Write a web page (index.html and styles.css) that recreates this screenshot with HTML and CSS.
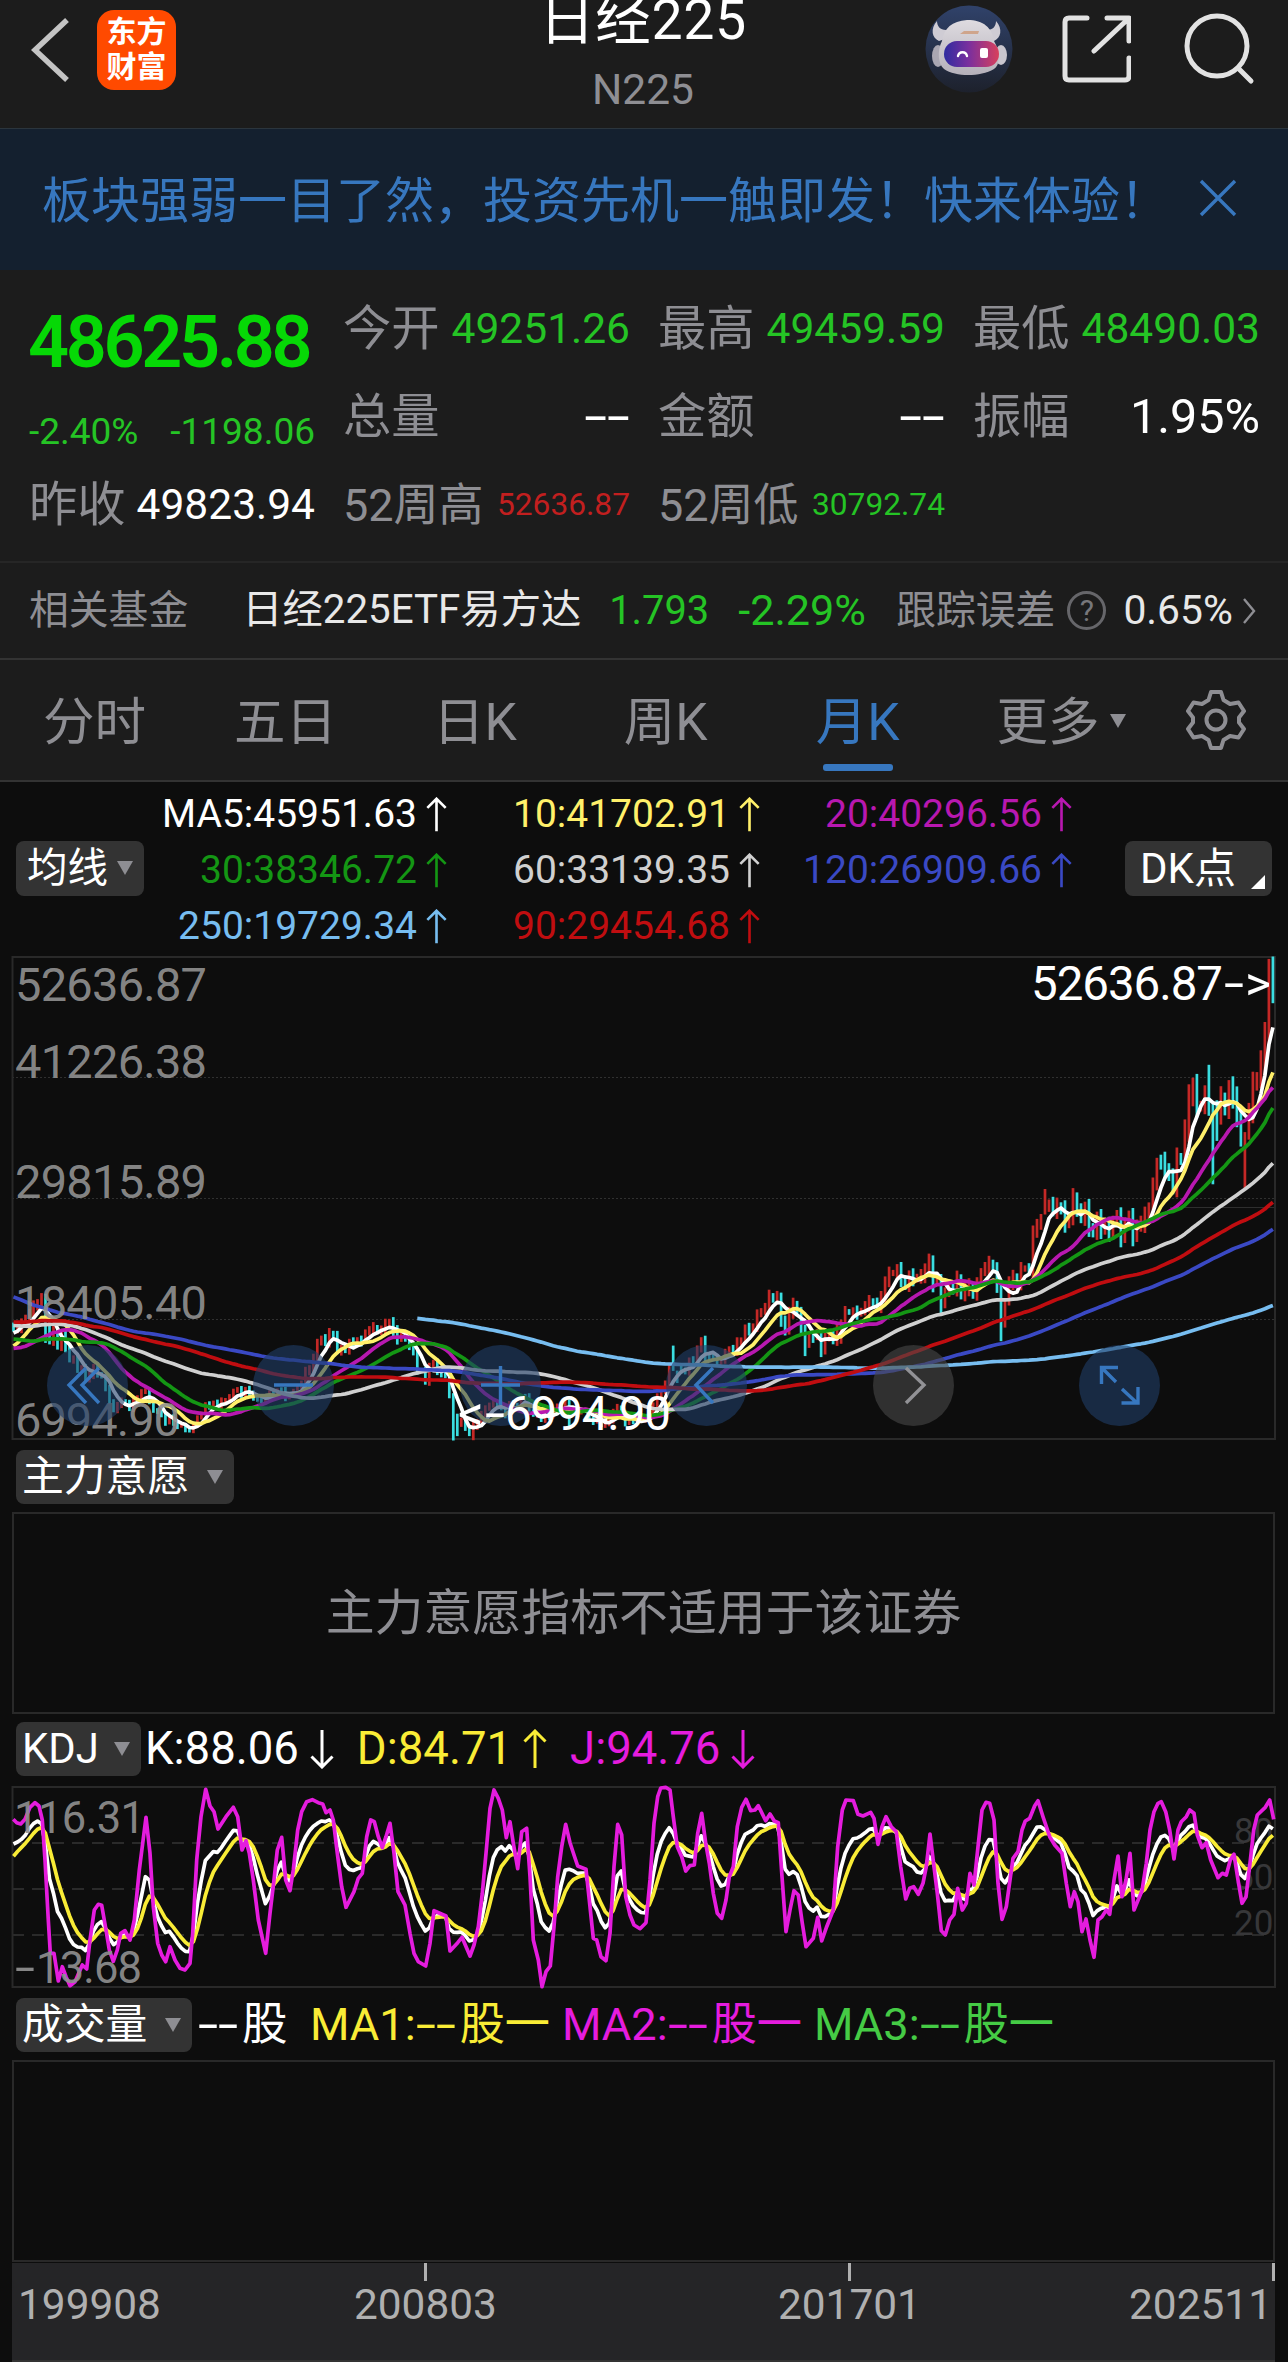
FILE: index.html
```
<!DOCTYPE html>
<html lang="zh-CN">
<head>
    <meta charset="UTF-8">
    <meta name="viewport" content="width=device-width, initial-scale=1.0">
    <title>日经225 N225</title>
    <link rel="stylesheet" href="styles.css">
</head>
<body>
    <svg class="defs" width="0" height="0">
        <symbol id="up" viewBox="0 0 24 40"><path d="M12 39V2M1.5 12.5L12 2l10.5 10.5" fill="none" stroke="currentColor" stroke-width="3"/></symbol>
        <symbol id="down" viewBox="0 0 24 40"><path d="M12 1v37M1.5 27.5L12 38l10.5-10.5" fill="none" stroke="currentColor" stroke-width="3"/></symbol>
    </svg>

    <header class="header">
        <svg class="back" width="40" height="66" viewBox="0 0 40 66"><path d="M36 3L4 33l32 30" fill="none" stroke="#c4c4c4" stroke-width="5.500"/></svg>
        <div class="logo"><span>东方</span><span>财富</span></div>
        <div class="title">
            <h1>日经225</h1>
            <p>N225</p>
        </div>
        <svg class="robot" width="88" height="88" viewBox="0 0 88 88">
            <defs>
                <linearGradient id="sky" x1="0" y1="0" x2="0" y2="1"><stop offset="0" stop-color="#30426a"/><stop offset="1" stop-color="#1d212c"/></linearGradient>
                <linearGradient id="visor" x1="0" y1="0" x2="1" y2="0"><stop offset="0" stop-color="#2f2ca0"/><stop offset=".45" stop-color="#7a2f9e"/><stop offset="1" stop-color="#d8405c"/></linearGradient>
                <linearGradient id="shell" x1="0" y1="0" x2="0" y2="1"><stop offset="0" stop-color="#dedbe0"/><stop offset="1" stop-color="#b5b1ba"/></linearGradient>
            </defs>
            <circle cx="44" cy="44" r="43.5" fill="url(#sky)"/>
            <path d="M12 16c-7 8-5 17 2 20l9-3-2-8c-6 0-9-4-9-9zM71 16c7 8 5 17-2 20l-9-3 2-8c6 0 9-4 9-9z" fill="#cfccd4"/>
            <ellipse cx="13" cy="51" rx="6" ry="11" fill="#aaa7b2"/>
            <ellipse cx="76" cy="50" rx="6" ry="10" fill="#c9c6ce"/>
            <path d="M17 36c2-13 10-20 25-21 17 0 25 8 27 21 7 12 6 24 0 28-14 8-38 8-50 0-6-5-7-18-2-28z" fill="url(#shell)"/>
            <rect x="19" y="36" width="55" height="26" rx="13" fill="url(#visor)"/>
            <path d="M33 51c1-5 8-5 9 0" fill="none" stroke="#fff" stroke-width="2.400" stroke-linecap="round"/>
            <rect x="55" y="43" width="8" height="10" rx="2" fill="#fff"/>
            <path d="M35 29l4-3h15l-1 3z" fill="#cfa58c"/>
        </svg>
        <svg class="share" width="70" height="70" viewBox="0 0 70 70"><path d="M26 4H8Q4 4 4 8v54q0 4 4 4h56q4 0 4-4V44M46 4h22v23M66 6L33 37" fill="none" stroke="#e2e2e2" stroke-width="5" stroke-linecap="round" stroke-linejoin="round"/></svg>
        <svg class="search" width="74" height="74" viewBox="0 0 74 74"><circle cx="34" cy="34" r="30" fill="none" stroke="#e2e2e2" stroke-width="5"/><path d="M55 56l13 13" stroke="#e2e2e2" stroke-width="5" stroke-linecap="round"/></svg>
    </header>

    <div class="banner">
        <p>板块强弱一目了然，投资先机一触即发！快来体验！</p>
        <svg width="38" height="38" viewBox="0 0 38 38"><path d="M2 2l34 34M36 2L2 36" stroke="#3777bf" stroke-width="3.400"/></svg>
    </div>

    <section class="quote">
        <div class="price">
            <strong>48625.88</strong>
            <div class="change"><span>-2.40%</span><span>-1198.06</span></div>
        </div>
        <div class="item"><label>今开</label><b class="green">49251.26</b></div>
        <div class="item"><label>最高</label><b class="green">49459.59</b></div>
        <div class="item"><label>最低</label><b class="green">48490.03</b></div>
        <div class="item"><label>总量</label><b class="large none">--</b></div>
        <div class="item"><label>金额</label><b class="large none">--</b></div>
        <div class="item"><label>振幅</label><b class="large">1.95%</b></div>
        <div class="item"><label>昨收</label><b>49823.94</b></div>
        <div class="item week"><label>52周高</label><b class="small red">52636.87</b></div>
        <div class="item week"><label>52周低</label><b class="small green">30792.74</b></div>
    </section>

    <div class="fund">
        <span class="grey">相关基金</span>
        <span class="fund-name">日经225ETF易方达</span>
        <span class="fund-price green">1.793</span>
        <span class="fund-change green">-2.29%</span>
        <span class="grey">跟踪误差</span>
        <span class="help">?</span>
        <span class="fund-error">0.65%</span>
        <svg width="14" height="28" viewBox="0 0 14 28"><path d="M2 2l10 12L2 26" fill="none" stroke="#8e8e93" stroke-width="2.400"/></svg>
    </div>

    <nav class="tabs">
        <a>分时</a>
        <a>五日</a>
        <a>日K</a>
        <a>周K</a>
        <a class="active">月K</a>
        <a class="more">更多<i class="caret"></i></a>
        <svg width="60" height="62" viewBox="0 0 60 62"><path d="M25 3h10l2.500 8 6.500 4 8.500-1.500L58 22l-5 6.500v5L58 40l-5.500 8.500L44 47l-6.500 4L35 59H25l-2.500-8-6.500-4-8.500 1.500L2 40l5-6.500v-5L2 22l5.500-8.500L16 15l6.500-4z" fill="none" stroke="#8e8e93" stroke-width="4" stroke-linejoin="round"/><circle cx="30" cy="31" r="9.500" fill="none" stroke="#8e8e93" stroke-width="4"/></svg>
    </nav>

    <section class="legend">
        <button class="pick">均线<i class="caret"></i></button>
        <div class="averages">
            <span class="ma5">MA5:45951.63<svg><use href="#up"/></svg></span>
            <span class="ma10">10:41702.91<svg><use href="#up"/></svg></span>
            <span class="ma20">20:40296.56<svg><use href="#up"/></svg></span>
            <span class="ma30">30:38346.72<svg><use href="#up"/></svg></span>
            <span class="ma60">60:33139.35<svg><use href="#up"/></svg></span>
            <span class="ma120">120:26909.66<svg><use href="#up"/></svg></span>
            <span class="ma250">250:19729.34<svg><use href="#up"/></svg></span>
            <span class="ma90">90:29454.68<svg><use href="#up"/></svg></span>
        </div>
        <button class="pick dk">DK点<i class="corner"></i></button>
    </section>

    <section class="kline">
        <svg id="kline" class="plot" width="1288" height="490" viewBox="0 953 1288 490">
            <g class="grid dots">
                <path d="M12 1077.500H1274M12 1198.500H1274M12 1319.500H1274"/>
            </g>
            <path d="M1170 1207.500H1274" stroke="#2e2e2e"/>
            <rect class="frame" x="12.500" y="957" width="1262.500" height="482"/>
            <g id="candles"></g>
            <g id="averages"></g>
            <g class="scale">
                <text x="15" y="1001" textLength="192">52636.87</text>
                <text x="15" y="1078" textLength="192">41226.38</text>
                <text x="15" y="1198" textLength="192">29815.89</text>
                <text x="15" y="1319" textLength="192">18405.40</text>
                <text x="15" y="1436" textLength="165">6994.90</text>
            </g>
        </svg>
        <div class="tools">
            <span><svg viewBox="0 0 81 81"><path d="M39 23L22 40l17 18M52 23L35 40l17 18"/></svg></span>
            <span><svg viewBox="0 0 81 81"><path d="M21 40h39"/></svg></span>
            <span><svg viewBox="0 0 81 81"><path d="M21 40h39M40.500 21v39"/></svg></span>
            <span><svg viewBox="0 0 81 81"><path d="M47 23L30 40l17 18"/></svg></span>
            <span class="off"><svg viewBox="0 0 81 81"><path d="M33 23l18 17-18 18"/></svg></span>
            <span><svg viewBox="0 0 81 81"><path d="M39 22.500H22.500V39M23 23l14 14M42.500 58H59V42M58 58L43 44"/></svg></span>
        </div>
        <svg class="marks" width="1288" height="490" viewBox="0 953 1288 490">
            <text y="1000"><tspan x="1031" textLength="192">52636.87</tspan><tspan x="1224" textLength="20" lengthAdjust="spacingAndGlyphs">-</tspan><tspan x="1245" textLength="26" lengthAdjust="spacingAndGlyphs">&gt;</tspan></text>
            <text y="1430"><tspan x="458" textLength="26" lengthAdjust="spacingAndGlyphs">&lt;</tspan><tspan x="485" textLength="20" lengthAdjust="spacingAndGlyphs">-</tspan><tspan x="505" textLength="166">6994.90</tspan></text>
        </svg>
    </section>

    <div class="bar main-bar">
        <button class="pick">主力意愿<i class="caret"></i></button>
    </div>
    <div class="panel message">主力意愿指标不适用于该证券</div>

    <div class="bar kdj-bar">
        <button class="pick">KDJ<i class="caret"></i></button>
        <span class="k">K:88.06<svg><use href="#down"/></svg></span>
        <span class="d">D:84.71<svg><use href="#up"/></svg></span>
        <span class="j">J:94.76<svg><use href="#down"/></svg></span>
    </div>
    <svg id="kdj" class="plot" width="1288" height="206" viewBox="0 1784 1288 206">
        <g class="grid dashes">
            <path d="M12 1843H1274M12 1889H1274M12 1935H1274"/>
        </g>
        <g class="levels">
            <text x="1234" y="1843">80</text>
            <text x="1234" y="1889">50</text>
            <text x="1234" y="1935">20</text>
        </g>
        <rect class="frame" x="12.500" y="1787" width="1262.500" height="200"/>
        <g id="kdjLines"></g>
        <g class="scale">
            <text x="14" y="1833" textLength="131">116.31</text>
            <text y="1983"><tspan x="15" textLength="20" lengthAdjust="spacingAndGlyphs">-</tspan><tspan x="36" textLength="106">13.68</tspan></text>
        </g>
    </svg>

    <div class="bar volume-bar">
        <button class="pick">成交量<i class="caret"></i></button>
        <span class="vol"><em>--</em>股</span>
        <span class="v1">MA1:<em>--</em>股一</span>
        <span class="v2">MA2:<em>--</em>股一</span>
        <span class="v3">MA3:<em>--</em>股一</span>
    </div>
    <div class="panel volume"></div>

    <footer class="axis">
        <span>199908</span>
        <span class="tick">200803</span>
        <span class="tick">201701</span>
        <span class="end">202511</span>
    </footer>

    <script src="script.js"></script>
</body>
</html>
```

FILE: styles.css
```
* {
    box-sizing: border-box;
}

body {
    margin: 0;
    width: 1288px;
    height: 2362px;
    overflow: hidden;
    background: #0d0d0d;
    color: #fff;
    font-family: Roboto, "Noto Sans CJK SC", sans-serif;
    line-height: 1;
}

h1, p {
    margin: 0;
    font-weight: 400;
}

svg {
    flex: none;
}

.defs {
    position: absolute;
}

.green {
    color: #25c425;
}

.red {
    color: #c21f1f;
}

.grey {
    color: #8e8e93;
}

/* header */
.header {
    display: flex;
    height: 129px;
    padding-left: 30px;
    background: #1c1c1c;
    border-bottom: 1px solid #2b353d;
}

.back {
    margin: 17px 0 0 1px;
}

.logo {
    display: flex;
    flex-direction: column;
    align-items: center;
    gap: 2px;
    width: 79px;
    height: 80px;
    margin: 10px 0 0 26px;
    padding-top: 5px;
    border-radius: 17px;
    background: #ff4a00;
    font-size: 30px;
    font-weight: 700;
    line-height: 33px;
}

.title {
    width: 400px;
    margin-left: 267px;
    text-align: center;
}

.title h1 {
    height: 68px;
    margin-top: -7px;
    font-size: 55.500px;
    letter-spacing: .6px;
}

.title p {
    margin-top: 8px;
    font-size: 42.500px;
    color: #8e8e93;
}

.robot {
    margin: 5px 0 0 82px;
}

.share {
    margin: 14px 0 0 48px;
}

.search {
    margin: 12px 0 0 52px;
}

/* banner */
.banner {
    display: flex;
    align-items: center;
    height: 141px;
    padding: 0 51px 0 42px;
    justify-content: space-between;
    background: #14202f;
    color: #3777bf;
}

.banner p {
    padding-top: 4px;
    font-size: 49px;
}

.banner svg {
    margin-top: -3px;
}

/* quote */
.quote {
    display: grid;
    grid-template-columns: 285px 287px 287px 287px;
    grid-template-rows: 88px 88px 88px;
    column-gap: 28px;
    height: 293px;
    padding: 15px 27px 0 30px;
    background: #1c1c1c;
    border-bottom: 2px solid #262626;
}

.price {
    grid-row: 1 / 3;
    color: #06d806;
}

.price strong {
    display: block;
    height: 104px;
    margin-left: -2px;
    padding-top: 22px;
    font-size: 72px;
    font-weight: 600;
    letter-spacing: -3.400px;
}

.change {
    display: flex;
    justify-content: space-between;
    margin: 24px 0 0 -1px;
    font-size: 37px;
    color: #25c425;
}

.item {
    display: flex;
    align-items: center;
    justify-content: space-between;
}

.item label {
    font-size: 48.300px;
    color: #8e8e93;
}

.item b {
    font-size: 42.500px;
    font-weight: 400;
}

.item .large {
    font-size: 48.500px;
}

.item .none {
    transform: scaleX(1.7);
    transform-origin: right;
}

.item .small {
    font-size: 31.700px;
}

.item:nth-child(8) label {
    margin-left: -1px;
}

.week label {
    font-size: 45px;
}

/* related fund */
.fund {
    display: flex;
    align-items: center;
    height: 97px;
    padding: 0 0 0 29px;
    background: #1c1c1c;
    border-bottom: 2px solid #333;
    font-size: 39.800px;
}

.fund-name {
    margin-left: 54px;
    color: #e8e8e8;
    font-size: 40.300px;
}

.fund-price {
    width: 99px;
    margin-left: 28px;
}

.fund-change {
    width: 129px;
    margin: 0 29px 0 30px;
    font-size: 43.200px;
}

.help {
    width: 39px;
    height: 39px;
    margin: 0 17px 0 12px;
    border: 3px solid #66666a;
    border-radius: 50%;
    color: #77777b;
    font-size: 30px;
    line-height: 34px;
    text-align: center;
}

.fund-error {
    width: 119px;
    color: #e8e8e8;
    font-size: 40.800px;
}

/* period tabs */
.tabs {
    display: flex;
    align-items: center;
    height: 122px;
    padding-left: 43px;
    background: #1c1c1c;
    border-bottom: 2px solid #333;
    color: #8e8e93;
    font-size: 51.500px;
}

.tabs a {
    display: flex;
    align-items: center;
    position: relative;
    height: 120px;
    padding-top: 5px;
    margin-right: 88px;
}

.tabs a:nth-child(2) {
    margin-right: 96px;
}

.tabs a:nth-child(3) {
    margin-right: 107px;
}

.tabs a:nth-child(4) {
    margin-right: 108px;
}

.tabs .active {
    color: #3777bf;
    margin-right: 97px;
}

.active::after {
    content: "";
    position: absolute;
    left: 7px;
    bottom: 9px;
    width: 70px;
    height: 7px;
    border-radius: 3px;
    background: #3777bf;
}

.tabs .more {
    margin-right: 60px;
}

.caret {
    border: 8.500px solid transparent;
    border-top: 14px solid #8e8e93;
    border-bottom: 0;
}

.more .caret {
    margin: 0 0 4px 10px;
}

/* moving averages */
.legend {
    display: flex;
    align-items: center;
    height: 171px;
    padding: 1px 16px 0;
}

.pick {
    display: flex;
    align-items: center;
    justify-content: space-between;
    width: 128px;
    height: 55px;
    padding: 0 11px 0 11px;
    border: 0;
    border-radius: 8px;
    background: #333;
    color: #fff;
    font: 40.500px/1 Roboto, "Noto Sans CJK SC", sans-serif;
}

.averages {
    display: grid;
    grid-template-columns: 303px 313px 312px;
    grid-template-rows: repeat(3, 56px);
    height: 170px;
    padding-top: 3px;
    font-size: 39px;
}

.averages span {
    display: flex;
    align-items: center;
    justify-content: flex-end;
    gap: 9px;
}

.averages svg {
    width: 21px;
    height: 35px;
}

.dk {
    align-items: stretch;
    width: 147px;
    margin-left: 53px;
    padding: 7px 7px 7px 15px;
    font-size: 42px;
}

.corner {
    align-self: flex-end;
    border-left: 14px solid transparent;
    border-bottom: 14px solid #fff;
}

.ma5 { color: #fff; }
.ma10 { color: #fff06a; }
.ma20 { color: #b818b0; }
.ma30 { color: #149614; }
.ma60 { color: #d0d0d0; }
.ma90 { color: #c00d10; }
.ma120 { color: #3a49c4; }
.ma250 { color: #77bdf0; }

/* charts */
.plot {
    display: block;
}

.frame {
    fill: none;
    stroke: #292929;
    stroke-width: 2;
}

.grid {
    fill: none;
    stroke: #303030;
}

.dots {
    stroke-dasharray: 2 2;
}

.dashes {
    stroke: #2a2a2a;
    stroke-width: 2;
    stroke-dasharray: 12 8;
}

.line {
    fill: none;
    stroke: currentColor;
    stroke-width: 3.700;
    stroke-linejoin: round;
}

.up {
    stroke: #c42826;
}

.fall {
    stroke: #3adde0;
}

.scale {
    fill: #909090;
    fill-opacity: .93;
    font-size: 47px;
}

#kdj .scale {
    font-size: 43.500px;
}

.levels {
    fill: #373739;
    font-size: 35px;
}

.kline {
    position: relative;
    height: 490px;
}

.marks {
    position: absolute;
    left: 0;
    top: 0;
    fill: #fff;
    font-size: 47.500px;
}

.tools {
    display: flex;
    gap: 125.400px;
    position: absolute;
    left: 47px;
    top: 392px;
}

.tools span {
    width: 81px;
    height: 81px;
    border-radius: 50%;
    background: rgba(31, 62, 103, .6);
}

.tools svg {
    fill: none;
    stroke: #3777bf;
    stroke-width: 3.400;
}

.tools .off {
    background: rgba(72, 72, 72, .6);
}

.tools .off svg {
    stroke: #929296;
}

/* indicator bars */
.bar {
    display: flex;
    align-items: center;
    padding-left: 16px;
    font-size: 45.500px;
}

.bar .pick {
    height: 54px;
    padding: 0 11px 0 6px;
    font-size: 41.800px;
}

.bar span {
    display: flex;
    align-items: center;
}

.bar svg {
    width: 24px;
    height: 40px;
    margin-left: 11px;
}

.bar em {
    width: 44px;
    font-style: normal;
    transform: scaleX(1.6);
    transform-origin: left;
}

.main-bar {
    height: 69px;
    padding-bottom: 2px;
}

.main-bar .pick {
    width: 218px;
}

.panel {
    height: 202px;
    margin: 0 13px 0 12px;
    border: 2px solid #292929;
}

.message {
    display: flex;
    align-items: center;
    justify-content: center;
    padding-top: 2px;
    color: #8e8e93;
    font-size: 48.900px;
}

.kdj-bar {
    height: 70px;
}

.kdj-bar .pick {
    width: 125px;
    margin-right: 4px;
}

.kdj-bar span {
    margin-right: 23px;
}

.d, .v1 { color: #f9ec36; }
.j, .v2 { color: #e51cde; }
.v3 { color: #45cb45; }

.volume-bar {
    height: 70px;
    padding-bottom: 1px;
}

.volume-bar .pick {
    width: 176px;
    margin-right: 6px;
}

.vol {
    width: 112px;
}

.v1, .v2, .v3 {
    width: 252px;
    font-size: 45.200px;
}

/* time axis */
.axis {
    display: flex;
    position: relative;
    height: 99px;
    margin: 1px 13px 0 12px;
    padding: 24px 3px 0 6px;
    background: #252527;
    border-bottom: 2px solid #333;
    color: #b0b0b0;
    font-size: 42.400px;
    line-height: 36px;
}

.axis .tick, .axis .end {
    position: relative;
}

.axis .tick {
    margin-left: 193px;
}

.axis .tick + .tick {
    margin-left: 281px;
}

.axis .end {
    margin-left: auto;
}

.tick::before, .end::before {
    content: "";
    position: absolute;
    top: -24px;
    left: 70px;
    width: 3px;
    height: 18px;
    background: #b0b0b0;
}

.end::before {
    left: auto;
    right: -3px;
}
```

FILE: script.js
```
// monthly closes, 1987-04 .. 1999-07, only needed to warm up the long averages
const history = [
    23275, 24772, 24176, 24488, 26029, 26011, 22765, 22687, 21564,
    23622, 25243, 26260, 27434, 27417, 27769, 27912, 27366, 27924, 27983, 29579, 30159,
    31581, 31986, 32839, 33713, 34267, 32949, 34954, 34431, 35637, 35549, 37269, 38916,
    37189, 34592, 29980, 29585, 33131, 31940, 31036, 25978, 20984, 25194, 22455, 23849,
    23293, 26409, 26292, 26111, 25790, 23291, 24121, 22336, 23916, 25222, 22687, 22984,
    22023, 21339, 19346, 17391, 18348, 15952, 15910, 18061, 17399, 16767, 17684, 16925,
    17024, 16953, 18591, 20919, 20552, 19590, 20380, 21027, 20106, 19703, 16407, 17417,
    20229, 19997, 19112, 19725, 20974, 20644, 20449, 20629, 19564, 19990, 19076, 19723,
    18650, 17053, 16140, 16807, 15437, 14517, 16678, 18117, 17913, 17655, 18744, 19868,
    20813, 20125, 21407, 22041, 21956, 22531, 20693, 20167, 21556, 20467, 21020, 19361,
    18330, 18557, 18003, 19151, 20069, 20605, 20331, 18229, 17888, 16459, 16636, 15259,
    16628, 16832, 16527, 15641, 15671, 15830, 16379, 14108, 13406, 13565, 14884, 13842,
    14499, 14368, 15837, 16702, 16112, 17530, 17862
];

// 1999-08 .. 2025-11
const closes = [
    17437, 17605, 17942, 18558, 18934,
    19540, 19960, 20337, 17974, 16332, 17411, 15727, 16861, 15747, 14540, 14649, 13786,
    13844, 12884, 13000, 13934, 13262, 12969, 11861, 10714, 9775, 10366, 10697, 10543,
    9998, 10588, 11025, 11493, 11764, 10622, 9878, 9619, 9383, 8640, 9216, 8579,
    8340, 8363, 7973, 7831, 8425, 9083, 9563, 10344, 10219, 10560, 10101, 10677,
    10784, 11042, 11715, 11762, 11236, 11859, 11326, 11082, 10824, 10771, 10899, 11489,
    11388, 11741, 11669, 11009, 11277, 11584, 11900, 12414, 13574, 13607, 14872, 16111,
    16650, 16205, 17060, 16906, 15467, 15505, 15457, 16141, 16128, 16399, 16274, 17226,
    17383, 17604, 17288, 17400, 17876, 18138, 17249, 16569, 16786, 16738, 15681, 15308,
    13592, 13603, 12526, 13850, 14339, 13481, 13377, 13073, 11260, 8577, 8512, 8860,
    7994, 7568, 8110, 8828, 9523, 9958, 10357, 10493, 10133, 10035, 9346, 10546,
    10198, 10126, 11090, 11057, 9769, 9383, 9537, 8824, 9369, 9202, 9937, 10229,
    10238, 10624, 9755, 9850, 9694, 9816, 9833, 8955, 8700, 8988, 8435, 8455,
    8803, 9723, 10084, 9521, 8543, 9007, 8695, 8840, 8870, 8928, 9446, 10395,
    11139, 11559, 12398, 13861, 13775, 13677, 13668, 13389, 14456, 14328, 15662, 16291,
    14915, 14841, 14828, 14304, 14632, 15162, 15621, 15425, 16174, 16414, 17460, 17451,
    17674, 18798, 19207, 19520, 20563, 20236, 20585, 18890, 17388, 19083, 19747, 19034,
    17518, 16027, 16759, 16666, 17235, 15576, 16569, 16887, 16450, 17425, 18308, 19114,
    19041, 19119, 18909, 19197, 19651, 20033, 19925, 19646, 20356, 22012, 22725, 22765,
    23098, 22068, 21454, 22468, 22202, 22305, 22554, 22865, 24120, 21920, 22351, 20015,
    20773, 21385, 21206, 22259, 20601, 21276, 21522, 20704, 21756, 22927, 23294, 23657,
    23205, 21143, 18917, 20194, 21878, 22288, 21710, 23140, 23185, 22977, 26434, 27444,
    27663, 28966, 29179, 28813, 28860, 28792, 27284, 28090, 29453, 28893, 27822, 28792,
    27002, 26527, 27821, 26848, 27280, 26393, 27802, 28092, 25937, 27587, 27969, 26095,
    27327, 27446, 28041, 28856, 30888, 33189, 33172, 32619, 31858, 30859, 33487, 33464,
    36287, 39166, 40369, 38406, 38488, 39583, 39102, 38648, 37920, 39081, 38208, 39895,
    39572, 37156, 35618, 36045, 37965, 40487, 41070, 42718, 44933, 52411, 48626
];

// months whose high / low went far outside open and close
const extremes = {
    8: [20833, 16200], 110: [11456, 6994.9], 111: [9521, 7406], 115: [8843, 7021],
    139: [10891, 8227], 165: [15942, 13555], 166: [13584, 12415], 192: [20946, 17714],
    193: [18770, 16901], 198: [17905, 14952], 202: [17613, 14864], 207: [18400, 16111],
    230: [24448, 20971], 232: [22698, 18948], 246: [23806, 20916], 247: [21719, 16358],
    248: [20365, 17646], 258: [30714, 28308], 265: [30795, 27293], 299: [42426, 37611],
    300: [38735, 31156], 301: [39080, 35247], 308: [36075, 30792], 314: [52411, 44357],
    315: [52636.87, 48235]
};

const x = i => 13.500 + i * 3.998;
const priceY = v => 956.500 + (52636.87 - v) / 11410.49 * 121;

function line(points, name) {
    const d = points.map(p => p[0].toFixed(1) + "," + p[1].toFixed(1)).join(" ");
    return `<polyline class="line ${name}" points="${d}"/>`;
}

let bars = "";
closes.forEach((close, i) => {
    const open = i ? closes[i - 1] : 17862;
    const swing = .014 + (i * 37 % 11) / 450;
    const [high, low] = extremes[i] || [Math.max(open, close) * (1 + swing), Math.min(open, close) * (1.004 - swing)];
    bars += `<path class="${close >= open ? "up" : "fall"}" stroke-width="2.700" d="M${x(i).toFixed(1)} ${priceY(high).toFixed(1)}V${priceY(low).toFixed(1)}"/>`;
});
document.getElementById("candles").innerHTML = bars;

const all = history.concat(closes);
document.getElementById("averages").innerHTML = [5, 10, 20, 30, 60, 120, 250, 90].map(n => {
    const points = [];
    closes.forEach((close, i) => {
        const end = history.length + i + 1;
        if (end < n) return;
        const sum = all.slice(end - n, end).reduce((a, b) => a + b, 0);
        points.push([x(i), priceY(sum / n)]);
    });
    return line(points, "ma" + n);
}).join("");

// J line, thirds of a pixel from the top left corner of the KDJ block
const j = [
    [40,298],[50,308],[62,312],[75,298],[90,262],[105,248],[117,258],[127,300],[135,420],[145,600],[151,700],[162,700],
    [175,783],[187,740],[198,770],[210,797],[225,785],[247,735],[260,747],[270,660],[283,570],[295,553],[305,556],
    [318,630],[328,690],[340,724],[352,690],[362,640],[375,632],[390,660],[403,600],[418,450],[438,292],[450,400],
    [460,560],[473,670],[485,705],[497,725],[510,680],[525,720],[540,745],[555,750],[570,730],[578,640],[590,420],
    [603,290],[617,208],[630,258],[642,275],[654,327],[678,290],[700,262],[713,290],[726,390],[738,362],[748,400],
    [760,480],[775,600],[797,700],[810,580],[822,480],[832,390],[845,352],[857,480],[870,512],[880,450],[893,330],
    [905,275],[920,245],[937,239],[955,248],[968,252],[978,278],[990,270],[1000,300],[1012,400],[1025,500],[1038,562],
    [1062,515],[1075,475],[1087,460],[1100,350],[1112,300],[1123,305],[1135,350],[1147,383],[1158,350],[1170,310],
    [1182,400],[1194,515],[1215,555],[1230,640],[1242,700],[1255,725],[1277,738],[1290,670],[1302,572],[1338,588],
    [1350,693],[1373,668],[1386,652],[1410,708],[1422,675],[1435,620],[1447,520],[1458,400],[1470,265],[1482,210],
    [1495,235],[1507,270],[1519,353],[1530,305],[1540,370],[1553,446],[1565,335],[1580,325],[1590,470],[1600,660],
    [1615,720],[1626,800],[1638,755],[1651,738],[1662,620],[1673,470],[1685,380],[1697,313],[1710,368],[1722,405],
    [1733,438],[1758,448],[1770,560],[1780,655],[1790,660],[1803,710],[1818,722],[1830,640],[1842,440],[1853,313],
    [1865,345],[1877,530],[1890,585],[1902,615],[1920,626],[1938,608],[1950,480],[1962,310],[1973,230],[1982,204],
    [1997,202],[2010,210],[2020,290],[2032,380],[2045,410],[2057,453],[2070,437],[2083,435],[2093,340],[2105,280],
    [2117,370],[2128,430],[2140,520],[2152,580],[2165,595],[2178,540],[2188,470],[2200,440],[2212,320],[2225,262],
    [2238,238],[2252,272],[2265,270],[2275,257],[2297,302],[2310,282],[2323,303],[2335,308],[2346,470],[2358,635],
    [2370,570],[2382,512],[2395,525],[2407,610],[2418,680],[2440,655],[2453,592],[2465,663],[2480,620],[2500,570],
    [2513,380],[2527,270],[2538,240],[2560,242],[2574,283],[2589,288],[2612,277],[2622,295],[2634,373],[2646,320],
    [2658,290],[2674,320],[2689,335],[2702,440],[2717,537],[2729,505],[2741,500],[2755,523],[2769,490],[2779,440],
    [2790,342],[2802,440],[2812,520],[2824,632],[2836,645],[2849,600],[2862,583],[2873,505],[2887,570],[2899,550],
    [2910,460],[2922,495],[2934,380],[2946,270],[2958,247],[2969,250],[2982,300],[2994,490],[3006,598],[3019,560],
    [3039,415],[3054,395],[3066,330],[3076,303],[3089,295],[3104,257],[3114,242],[3129,290],[3149,350],[3164,375],
    [3186,400],[3199,490],[3211,560],[3223,515],[3234,545],[3246,635],[3258,597],[3270,660],[3282,712],[3294,600],
    [3306,590],[3319,570],[3329,583],[3342,480],[3354,408],[3366,530],[3378,480],[3390,400],[3402,570],[3426,512],
    [3439,430],[3450,330],[3462,275],[3474,250],[3484,245],[3497,275],[3509,330],[3522,417],[3534,330],[3544,305],
    [3559,290],[3569,270],[3582,280],[3592,345],[3606,383],[3619,368],[3632,420],[3654,473],[3667,460],[3679,465],
    [3691,420],[3702,403],[3714,480],[3726,550],[3738,530],[3750,430],[3761,330],[3772,285],[3796,262],[3809,240],[3821,298]
].map(p => [p[0] / 3, 1720 + p[1] / 3]);

// K and D follow from J: J = 3K - 2D, D = (2 * previous D + K) / 3
const kLine = [];
const dLine = [];
let d = 1720 + 427 / 3;
let at = 0;
closes.forEach((close, i) => {
    const px = x(i);
    while (at < j.length - 2 && j[at + 1][0] < px) at++;
    const [a, b] = [j[at], j[at + 1]];
    const jy = a[1] + (b[1] - a[1]) * Math.min(1, (px - a[0]) / (b[0] - a[0]));
    const k = (3 * jy + 4 * d) / 7;
    d = (2 * d + k) / 3;
    kLine.push([px, k]);
    dLine.push([px, d]);
});
document.getElementById("kdjLines").innerHTML = line(kLine, "k") + line(dLine, "d") + line(j, "j");
```
